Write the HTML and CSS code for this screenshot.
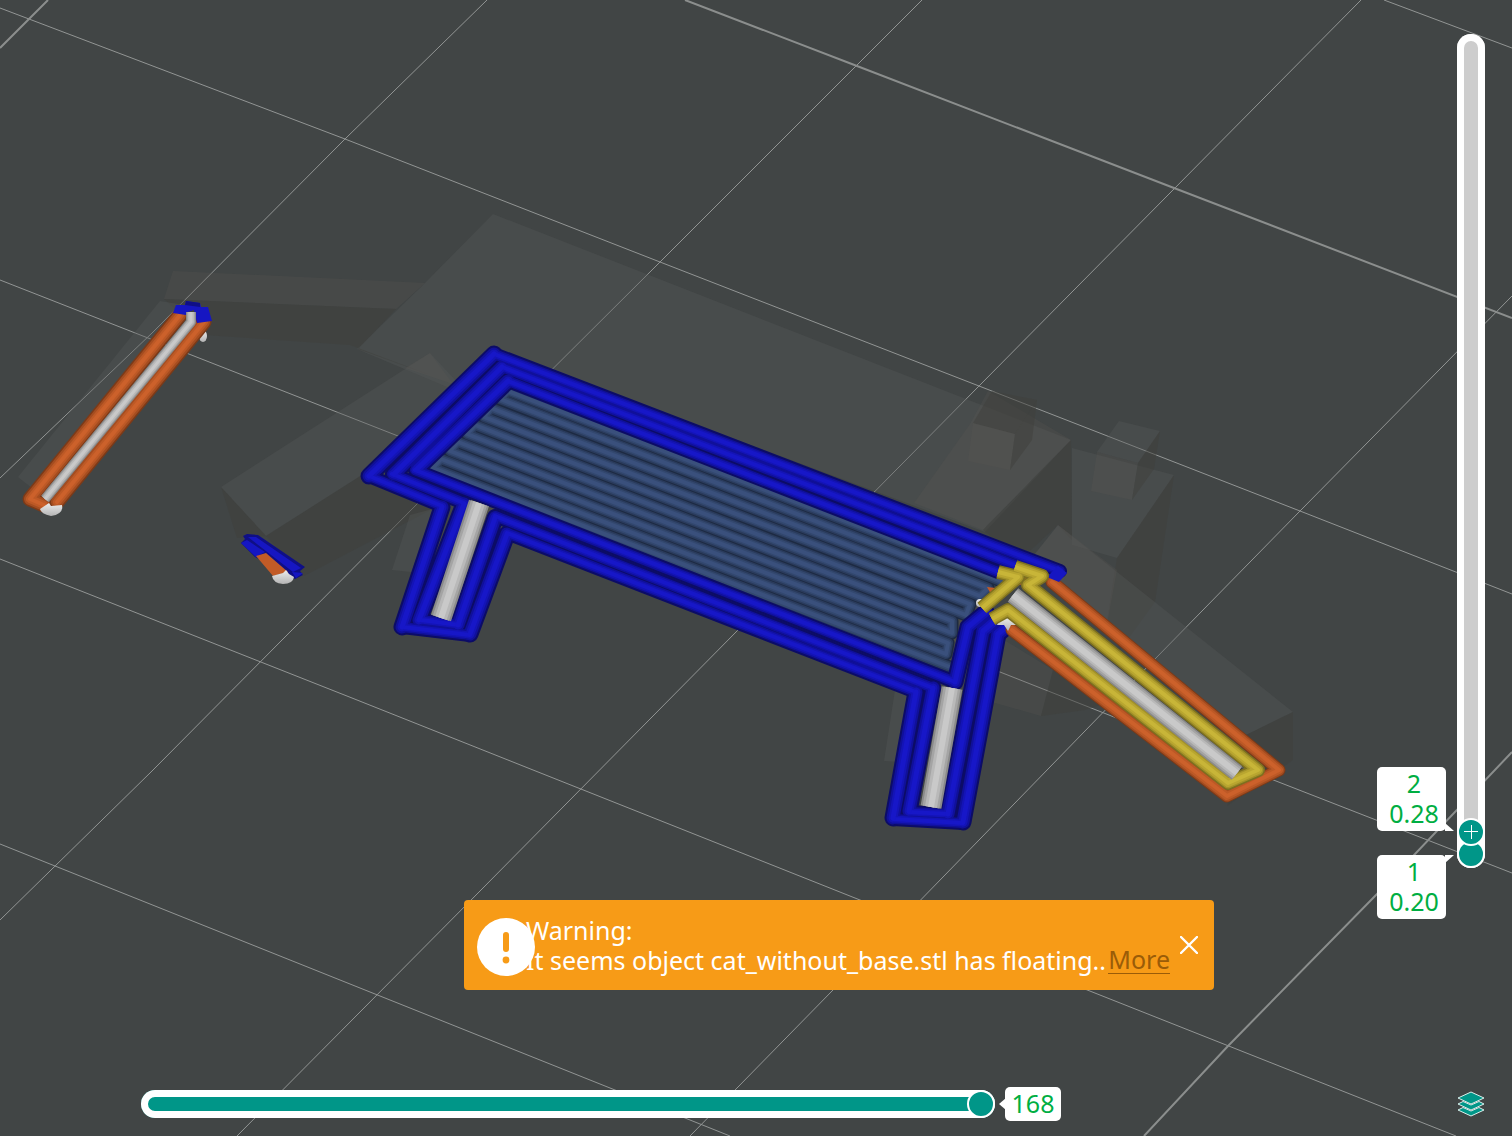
FILE: index.html
```html
<!DOCTYPE html>
<html lang="en">
<head>
<meta charset="utf-8">
<meta name="viewport" content="width=device-width, initial-scale=1">
<title>Sliced plate preview</title>
<link rel="stylesheet" href="styles.css">
</head>
<body>
<main class="preview">
<svg class="scene" viewBox="0 0 1512 1136" preserveAspectRatio="xMidYMid slice" role="img" aria-label="Toolpaths of layers 1 and 2">
  <defs>
    <g id="wall-cross">
      <path d="M494 354 1060 571M502 367 1015 565M508 381 998 572"/>
      <path d="M369 476 442 506M392 474 464 503M415 470 955 682"/>
      <path d="M507 533 916 692M495 516 933 688"/>
      <path d="M402 627 470 635M421 620 459 625M893 819 963 823M909 812 948 814"/>
    </g>
    <g id="wall-steep">
      <path d="M369 476 494 354M394 474 502 367M417 469 508 381"/>
      <path d="M442 507 402 627M464 504 419 620M495 518 458 625M507 534 470 634"/>
      <path d="M916 692 893 818M933 688 909 811M983 631 948 814M998 634 963 822"/>
      <path d="M955 682 968 627 986 612M983 631 996 620M998 634 1005 628"/>
    </g>
    <path id="infill" d="M1001 581 508 391 500 399 988 588 980 596 491 408 484 417 970 604 966 615 475 425 467 434 952 621 952 633 458 442 450 451 948 643 946 654 441 459 433 468 950 667"/>
    <path id="overhang-right" d="M1052 582 1279 770 1227 796 1012 630"/>
    <path id="overhang-left" d="M180 315 30 499 44 505M204 322 57 502"/>
    <path id="inner-wall" d="M1015 567 1042 576 1028 585 1258 770 1228 783 1008 610 992 619M998 572 1018 577 982 608"/>
    <path id="gap-right" d="M1013 595 1237 773"/>
    <path id="gap-left" d="M191 312 191 322 45 499"/>
    <path id="gap-legs" d="M479 503 441 618M952 688 931 807"/>
    <linearGradient id="seam-shade" x1="0" y1="0" x2="0" y2="1">
      <stop offset="0" stop-color="#ededed"/><stop offset="1" stop-color="#b4b4b4"/>
    </linearGradient>
  </defs>

  <rect class="bed" width="1512" height="1136"/>

  <!-- bed grid -->
  <path class="grid" d="M1384 0 1512 48M0 8 345 139 660 262 979 386 1300 511 1512 594M0 280 398 436 1000 672 1276 781 1512 873M0 559 352 698 860 900 1456 1136M0 844 465 1030 730 1136"/>
  <path class="grid" d="M0 478 152 333 345 139 487 0M0 920 152 771 418 503 660 262 922 0M237 1136 481 890 738 630 979 386 1361 0M690 1136 833 990 980 839 1154 660 1300 511 1512 296"/>
  <path class="grid grid-major" d="M685 0 857 66 1174 188 1512 318M0 48 48 0M1144 1136 1228 1046 1377 894 1512 752"/>

  <!-- translucent shell of the model -->
  <g class="shell">
    <path class="lit" d="M493 214 1071 440 985 532 495 350 452 389 357 349 425 283Z"/>
    <path class="warm" d="M173 271 425 283 396 309 164 299Z"/>
    <path class="dim" d="M164 299 396 309 358 349 430 375 350 345 205 335Z"/>
    <path class="lit" d="M160 301 190 306 32 488 18 477Z"/>
    <path class="lit" d="M430 353 470 396 362 475 266 536 221 487Z"/>
    <path class="warm" d="M430 353 453 384 405 368Z"/>
    <path class="dim" d="M362 475 440 505 304 576 266 536ZM221 487 266 536 237 538Z"/>
    <path class="lit" d="M410 515 440 507 420 573 392 570ZM895 690 915 695 900 762 884 761Z"/>
    <path class="warm" d="M970 424 988 391 1071 440 983 530 914 503Z"/>
    <path class="dim" d="M992 391 1037 400 1015 434 973 423Z"/>
    <path class="warm" d="M973 423 1015 434 1010 470 968 461Z"/>
    <path class="dim" d="M1037 400 1032 440 1010 470 1015 434ZM1071 440 1072 540 1058 525 1020 560 983 530Z"/>
    <path class="lit" d="M1072 448 1174 475 1117 558 1072 545ZM1119 421 1160 431 1138 463 1097 452Z"/>
    <path class="warm" d="M1097 452 1138 463 1132 500 1091 491Z"/>
    <path class="dim" d="M1160 431 1154 469 1132 500 1138 463ZM1174 475 1155 602 1120 650 1107 622 1117 558Z"/>
    <path class="lit" d="M1058 525 1293 712 1246 735 1030 560Z"/>
    <path class="warm" d="M1058 525 1117 570 1107 625 1030 560Z"/>
    <path class="dim" d="M1293 712 1293 760 1227 806 1246 735Z"/>
    <path class="warm" d="M1004 640 1053 670 1041 716 992 702Z"/>
    <path class="dim" d="M1053 670 1100 705 1085 710 1041 716Z"/>
  </g>

  <!-- gaps between walls and infill -->
  <path class="gap-floor" d="M508 386 995 576 952 680 420 470ZM478 500 500 512 486 528Z"/>

  <g class="seams">
    <ellipse cx="203" cy="336" rx="4" ry="6"/>
  </g>

  <!-- solid infill -->
  <g class="tube infill">
    <use href="#infill" class="t-edge"/><use href="#infill" class="t-side"/><use href="#infill" class="t-core"/><use href="#infill" class="t-top"/>
  </g>

  <!-- outer and inner walls -->
  <g class="tube wall">
    <use href="#wall-cross" class="t-edge"/><use href="#wall-steep" class="t-edge steep"/>
    <use href="#wall-cross" class="t-side"/><use href="#wall-steep" class="t-side steep"/>
    <use href="#wall-cross" class="t-core"/><use href="#wall-steep" class="t-core steep"/>
    <use href="#wall-cross" class="t-top"/><use href="#wall-steep" class="t-top steep"/>
  </g>

  <g class="tube filler">
    <use href="#gap-legs" class="t-edge"/><use href="#gap-legs" class="t-side"/><use href="#gap-legs" class="t-core"/><use href="#gap-legs" class="t-top"/>
  </g>

  <!-- right front leg -->
  <g class="seams"><ellipse cx="980" cy="603" rx="4" ry="4"/></g>
  <path class="orange-bit" d="M987 587 996 588 992 596ZM1012 578 1034 572 1030 582 1016 586Z"/>
  <g class="tube overhang">
    <use href="#overhang-right" class="t-edge"/><use href="#overhang-right" class="t-side"/><use href="#overhang-right" class="t-core"/><use href="#overhang-right" class="t-top"/>
  </g>
  <path class="blue-cap" d="M1058 566 1067 573 1059 582 1047 577Z"/>
  <g class="seams"><path d="M997 625Q1000 617 1009 617 1017 618 1020 625L1011 625 1008 631 1004 625Z"/></g>
  <g class="tube yellow">
    <use href="#inner-wall" class="t-edge"/><use href="#inner-wall" class="t-side"/><use href="#inner-wall" class="t-core"/><use href="#inner-wall" class="t-top"/>
  </g>
  <g class="tube filler filler-mid">
    <use href="#gap-right" class="t-edge"/><use href="#gap-right" class="t-side"/><use href="#gap-right" class="t-core"/><use href="#gap-right" class="t-top"/>
  </g>

  <!-- ear at the far left -->
  <g class="tube overhang overhang-wide">
    <use href="#overhang-left" class="t-edge"/><use href="#overhang-left" class="t-side"/><use href="#overhang-left" class="t-core"/><use href="#overhang-left" class="t-top"/>
  </g>
  <path class="blue-cap" d="M176 305 185 305 186 301 200 303 201 307 208 307 212 321 197 323 194 310 188 312 186 315 173 313Z"/>
  <path class="blue-shade" d="M186 301 200 303 200 307 185 305Z"/>
  <g class="tube filler filler-thin">
    <use href="#gap-left" class="t-edge"/><use href="#gap-left" class="t-side"/><use href="#gap-left" class="t-core"/><use href="#gap-left" class="t-top"/>
  </g>
  <g class="seams"><path d="M40 509 49 503 51 506 62 505Q64 514 51 516 41 514 40 509Z"/></g>

  <!-- small fragment -->
  <path class="blue-shade" d="M243 536 247 534 258 535 305 567 300 571 303 575 295 579 255 557 241 543 245 539Z"/>
  <path class="blue-cap" d="M248 537 256 537 301 568 293 572ZM241 543 247 540 265 552 256 557ZM292 572 303 573 296 578Z"/>
  <path class="orange-bit" d="M256 556 266 553 288 572 273 576Z"/>
  <g class="seams"><path d="M272 576 283 573 286 570 289 574 294 577Q293 584 283 584 273 583 272 576Z"/></g>
</svg>

<div class="hud">
  <section class="center">
    <div class="notice" role="alert">
      <svg class="notice-icon" viewBox="0 0 58 58" aria-hidden="true"><circle cx="29" cy="29" r="29" fill="#fff"/><path d="M29 17V31" stroke="#f79b17" stroke-width="6" stroke-linecap="round"/><circle cx="29" cy="42" r="3.4" fill="#f79b17"/></svg>
      <p class="notice-text">Warning:<br>It seems object cat_without_base.stl has floating..</p>
      <a class="more" href="#details">More</a>
      <button class="close" type="button" aria-label="Close"><svg viewBox="0 0 18 18" aria-hidden="true"><path d="M1 1 17 17M17 1 1 17"/></svg></button>
    </div>
    <div class="moves">
      <input class="move-range" id="move" type="range" min="0" max="168" value="168" aria-label="Move">
      <output class="tag move-tag" for="move">168</output>
    </div>
  </section>
  <aside class="side">
    <div class="layers">
      <input class="layer-range" id="low" type="range" min="1" max="37" value="1" aria-label="Lowest layer">
      <input class="layer-range layer-top" id="high" type="range" min="1" max="37" value="2" aria-label="Highest layer">
      <output class="tag layer-tag tag-high" for="high"><span>2</span><span>0.28</span></output>
      <output class="tag layer-tag tag-low" for="low"><span>1</span><span>0.20</span></output>
    </div>
    <button class="layers-button" type="button" aria-label="Layers"><svg viewBox="0 0 28 28" aria-hidden="true"><path d="M1 20 14 26 27 20 22 17.500 14 21 6 17.500Z"/><path d="M1 14 14 20 27 14 22 11.500 14 15 6 11.500Z"/><path d="M1 8 14 2 27 8 14 14Z"/></svg></button>
  </aside>
</div>
</main>
</body>
</html>
```
FILE: styles.css
```css
* { box-sizing: border-box; }
body { margin: 0; background: #414545; font-family: "Noto Sans", "Open Sans", sans-serif; font-size: 25px; line-height: 30px; }
.preview { display: grid; min-height: 100vh; overflow: hidden; }
.scene, .hud { grid-area: 1 / 1; }
.scene { width: 100%; height: 100vh; display: block; }
button { padding: 0; border: 0; background: none; cursor: pointer; }

/* scene */
.bed { fill: #414545; }
.grid { fill: none; stroke: #929594; stroke-width: 1; }
.grid-major { stroke: #8b8e8d; stroke-width: 2; }
.lit { fill: #555a59; fill-opacity: .35; }
.warm { fill: #5a5853; fill-opacity: .25; }
.dim { fill: #40403c; fill-opacity: .5; }
.gap-floor { fill: #4a4a46; }
.seams { fill: url(#seam-shade); }
.tube { fill: none; stroke-linejoin: round; stroke-linecap: round; }
.wall .t-edge { stroke: #0c0c66; stroke-width: 14; }
.wall .t-side { stroke: #10109a; stroke-width: 10; }
.wall .t-core { stroke: #1414b6; stroke-width: 7; }
.wall .t-top { stroke: #1717c8; stroke-width: 4; }
.wall .t-edge.steep { stroke-width: 17; }
.wall .t-side.steep { stroke-width: 13; }
.wall .t-core.steep { stroke-width: 9; }
.wall .t-top.steep { stroke-width: 5; }
.infill .t-edge { stroke: #1d2a42; stroke-width: 13; }
.infill .t-side { stroke: #2a3b5c; stroke-width: 10; }
.infill .t-core { stroke: #33486f; stroke-width: 7; }
.infill .t-top { stroke: #3a507c; stroke-width: 4; }
.overhang .t-edge { stroke: #7c3a18; stroke-width: 13; }
.overhang .t-side { stroke: #a54d20; stroke-width: 11; }
.overhang .t-core { stroke: #bd5926; stroke-width: 8; }
.overhang .t-top { stroke: #cc612b; stroke-width: 4; }
.overhang-wide .t-edge { stroke-width: 15; }
.overhang-wide .t-side { stroke-width: 12; }
.yellow { stroke-linecap: butt; }
.yellow .t-edge { stroke: #7d701f; stroke-width: 14; }
.yellow .t-side { stroke: #a39229; stroke-width: 11; }
.yellow .t-core { stroke: #b9a630; stroke-width: 8; }
.yellow .t-top { stroke: #c8b538; stroke-width: 4; }
.filler { stroke-linecap: butt; }
.filler .t-edge { stroke: #8a8a8a; stroke-width: 21; }
.filler .t-side { stroke: #a4a4a4; stroke-width: 17; }
.filler .t-core { stroke: #b9b9b9; stroke-width: 12; }
.filler .t-top { stroke: #c9c9c9; stroke-width: 6; }
.filler-mid .t-edge { stroke-width: 17; }
.filler-mid .t-side { stroke-width: 14; }
.filler-mid .t-core { stroke-width: 10; }
.filler-thin .t-edge { stroke-width: 10; }
.filler-thin .t-side { stroke-width: 8; }
.filler-thin .t-core { stroke-width: 6; }
.filler-thin .t-top { stroke-width: 3; }
.blue-cap { fill: #1616c2; }
.blue-shade { fill: #0f0f86; }
.orange-bit { fill: #c25b27; }

/* controls over the scene */
.hud { display: grid; grid-template-columns: minmax(0, 1fr) 136px; z-index: 1; }
.center { display: flex; flex-direction: column; justify-content: flex-end; padding: 0 0 15px 141px; }
.notice { display: flex; align-items: center; align-self: flex-end; width: 750px; height: 90px; margin: 0 162px 97px 0; padding: 0 16px 0 13px; border-radius: 4px; background: #f79b17; color: #fff; }
.notice-icon { flex: none; width: 58px; height: 58px; margin: 3px -9px 0 0; }
.notice-text { margin: 0; white-space: nowrap; }
.more { align-self: flex-end; margin: 0 10px 16px auto; color: #9a5c08; text-decoration: none; border-bottom: 1px solid #9a5c08; line-height: 28px; }
.close { display: flex; width: 18px; height: 18px; }
.close svg { width: 18px; height: 18px; fill: none; stroke: #fff; stroke-width: 2.4; stroke-linecap: round; }
.moves { display: flex; align-items: center; gap: 10px; }
.move-range { appearance: none; width: 854px; height: 28px; margin: 0; border-radius: 14px; background: #009688; box-shadow: inset 0 0 0 7px #fff; }
.tag { position: relative; border-radius: 5px; background: #fff; color: #00ae42; text-align: center; }
.tag::before { content: ""; position: absolute; background: #fff; }
.move-tag { width: 56px; height: 34px; line-height: 33px; }
.move-tag::before { left: -6px; top: 11px; width: 7px; height: 12px; clip-path: polygon(0 50%, 100% 0, 100% 100%); }
.move-range::-webkit-slider-thumb, .layer-range::-webkit-slider-thumb { appearance: none; width: 28px; height: 28px; border: 2px solid #fff; border-radius: 50%; background: #009688; pointer-events: auto; }

.side { display: flex; flex-direction: column; justify-content: space-between; align-items: flex-end; padding: 34px 27px 18px 0; }
.layers { position: relative; width: 28px; height: calc(100vh - 302px); border-radius: 14px; background: #cdcdcd; box-shadow: inset 0 0 0 7px #fff; }
.layer-range { appearance: none; position: absolute; inset: 0; width: 28px; height: 100%; margin: 0; background: none; writing-mode: vertical-lr; direction: rtl; pointer-events: none; }
.layer-top::-webkit-slider-thumb { background: linear-gradient(#fff, #fff) center / 14px 1px no-repeat, linear-gradient(#fff, #fff) center / 1px 14px no-repeat, #009688; }
.layer-tag { display: flex; flex-direction: column; position: absolute; right: 39px; width: 69px; height: 64px; padding: 1px 0 0 5px; }
.layer-tag::before { left: 68px; width: 9px; height: 8px; }
.tag-high { bottom: 37px; }
.tag-low { bottom: -51px; }
.tag-high::before { bottom: 0; clip-path: polygon(0 0, 100% 100%, 0 100%); }
.tag-low::before { top: 0; clip-path: polygon(0 0, 100% 0, 0 100%); }
.layers-button { width: 28px; height: 28px; }
.layers-button svg { display: block; width: 28px; height: 28px; fill: #009688; stroke: #d9efec; stroke-width: 1; }
```
